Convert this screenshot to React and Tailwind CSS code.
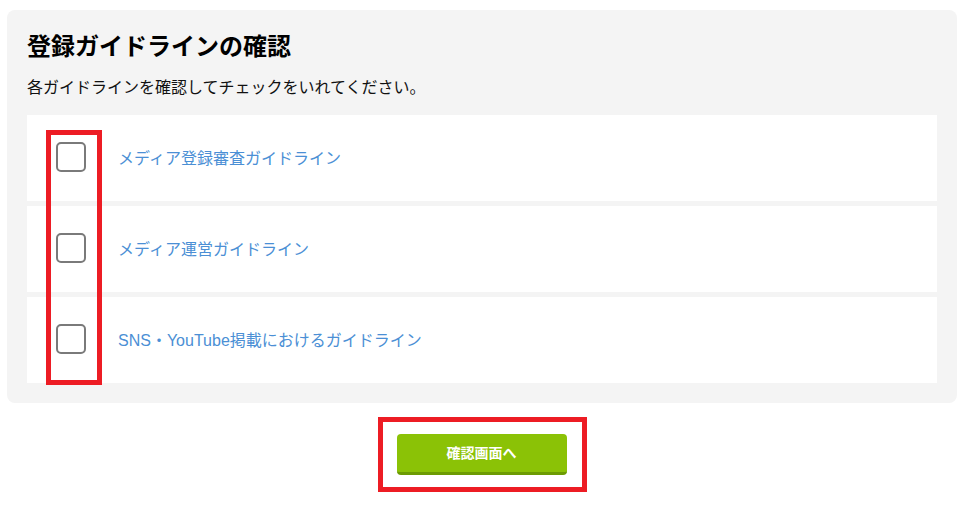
import React, { useState } from 'react';

const guidelines = [
  'メディア登録審査ガイドライン',
  'メディア運営ガイドライン',
  'SNS・YouTube掲載におけるガイドライン',
];

export default function App() {
  const [checked, setChecked] = useState([false, false, false]);

  const toggle = (i) => {
    setChecked(checked.map((c, idx) => (idx === i ? !c : c)));
  };

  return (
    <div
      className="relative w-[959px] h-[512px] bg-white pt-[10px] px-[7px]"
      style={{ fontFamily: '"Liberation Sans", "Noto Sans CJK JP", sans-serif' }}
    >
      {/* Guideline panel */}
      <div className="bg-[#f4f4f4] rounded-[8px] w-[950px] pt-[19px] px-[20px] pb-[20px]">
        <h2 className="text-[24px] leading-[36px] font-bold text-black">登録ガイドラインの確認</h2>
        <p className="mt-[11px] text-[16px] leading-[24px] text-[#111]">
          各ガイドラインを確認してチェックをいれてください。
        </p>

        <div className="mt-[15px] flex flex-col gap-[5px]">
          {guidelines.map((g, i) => (
            <div key={g} className="bg-white h-[86px] flex items-center pl-[29px] pb-[2px]">
              <button
                onClick={() => toggle(i)}
                className="w-[30px] h-[30px] rounded-[5px] border-2 border-[#7a7a7a] bg-white flex items-center justify-center shrink-0"
              >
                {checked[i] && (
                  <svg width="18" height="18" viewBox="0 0 24 24" fill="none" stroke="#4b8fd5" strokeWidth="3">
                    <path d="M5 12l5 5 9-10" />
                  </svg>
                )}
              </button>
              <a href="#" className="ml-[32px] mt-[4px] text-[16px] text-[#4b8fd5]">{g}</a>
            </div>
          ))}
        </div>
      </div>

      {/* Submit */}
      <div className="flex justify-center mt-[31px] pl-[4px]">
        <div className="relative">
          <button className="w-[170px] h-[41px] rounded-[4px] bg-[#8bc206] border-b-[3px] border-[#6c9b03] text-white text-[14px] font-bold">
            確認画面へ
          </button>
          <div className="absolute left-[-19px] top-[-17px] w-[209px] h-[75px] border-[5px] border-[#ed1c24] pointer-events-none"></div>
        </div>
      </div>

      {/* Annotation around checkboxes */}
      <div className="absolute left-[46px] top-[130px] w-[56px] h-[255px] border-[5px] border-[#ed1c24] pointer-events-none"></div>
    </div>
  );
}
